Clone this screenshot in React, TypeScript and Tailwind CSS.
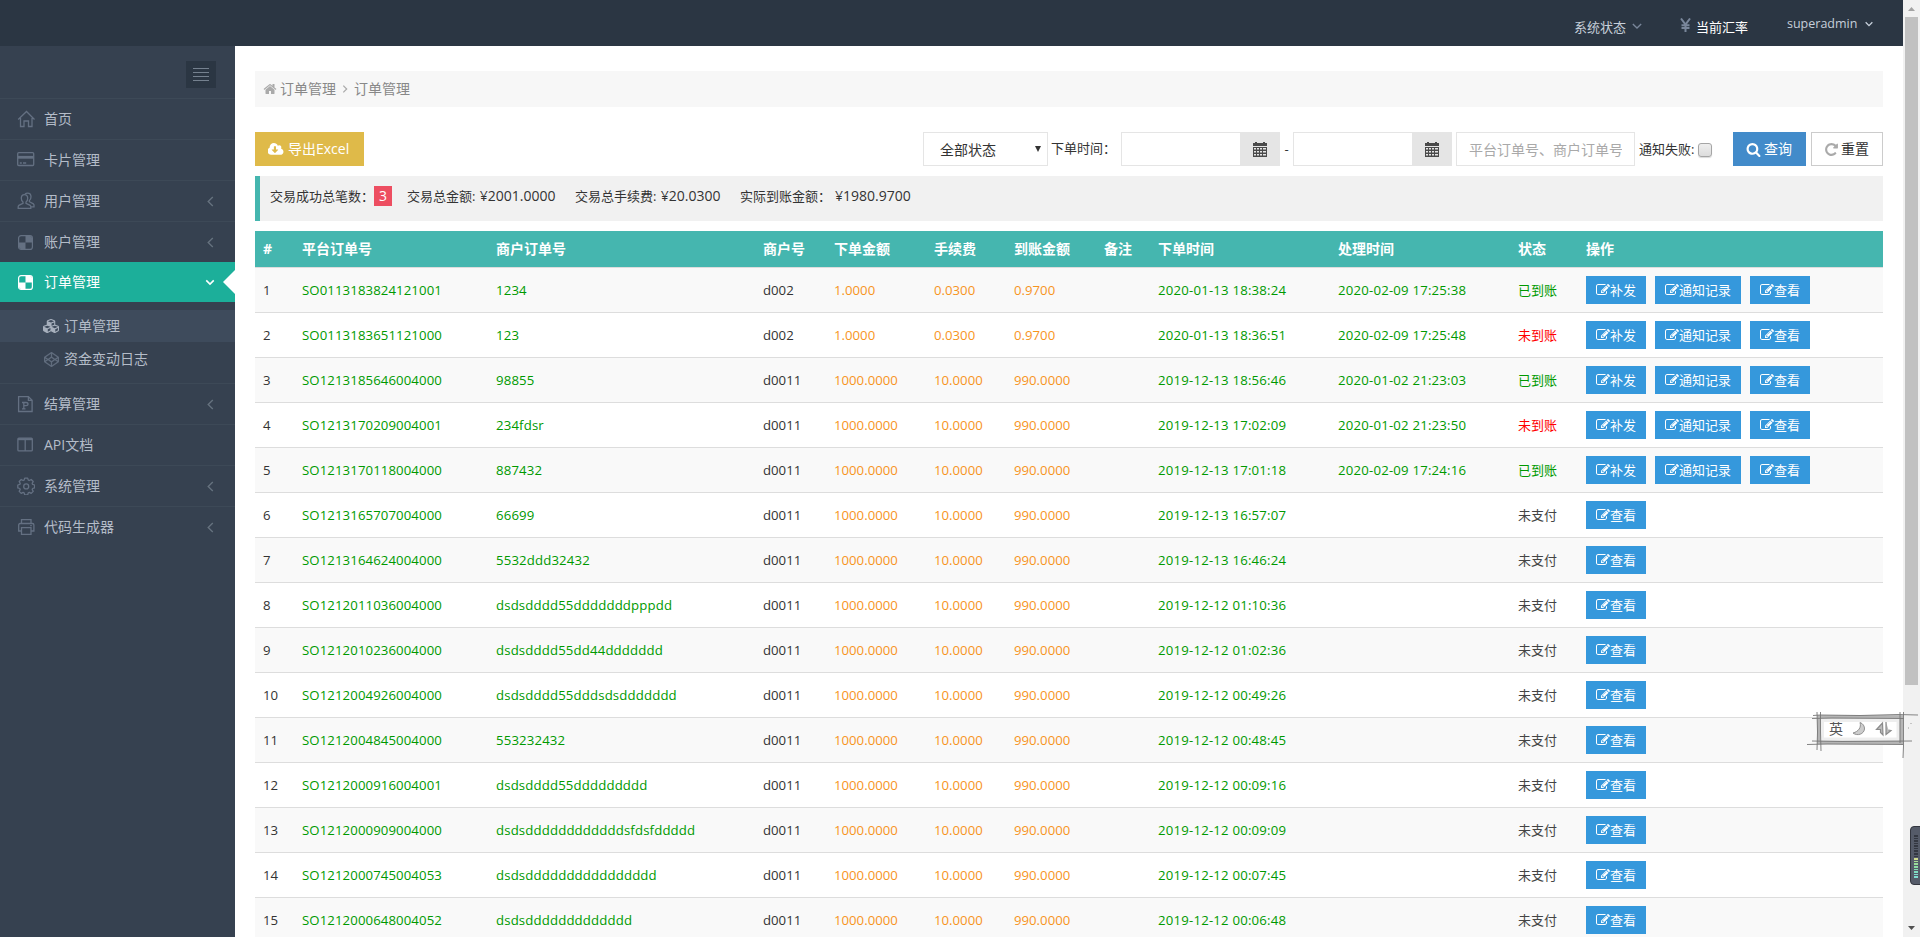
import React from 'react';
import { FaCubes, FaCodepen } from 'react-icons/fa';

interface Order {
  no: string;
  merchantNo: string;
  merchant: string;
  amount: string;
  fee: string;
  received: string;
  createdAt: string;
  handledAt?: string;
  status: '已到账' | '未到账' | '未支付';
}

const small = { merchant: 'd002', amount: '1.0000', fee: '0.0300', received: '0.9700' };
const large = { merchant: 'd0011', amount: '1000.0000', fee: '10.0000', received: '990.0000' };

const orders: Order[] = [
  { no: 'SO0113183824121001', merchantNo: '1234', ...small, createdAt: '2020-01-13 18:38:24', handledAt: '2020-02-09 17:25:38', status: '已到账' },
  { no: 'SO0113183651121000', merchantNo: '123', ...small, createdAt: '2020-01-13 18:36:51', handledAt: '2020-02-09 17:25:48', status: '未到账' },
  { no: 'SO1213185646004000', merchantNo: '98855', ...large, createdAt: '2019-12-13 18:56:46', handledAt: '2020-01-02 21:23:03', status: '已到账' },
  { no: 'SO1213170209004001', merchantNo: '234fdsr', ...large, createdAt: '2019-12-13 17:02:09', handledAt: '2020-01-02 21:23:50', status: '未到账' },
  { no: 'SO1213170118004000', merchantNo: '887432', ...large, createdAt: '2019-12-13 17:01:18', handledAt: '2020-02-09 17:24:16', status: '已到账' },
  { no: 'SO1213165707004000', merchantNo: '66699', ...large, createdAt: '2019-12-13 16:57:07', status: '未支付' },
  { no: 'SO1213164624004000', merchantNo: '5532ddd32432', ...large, createdAt: '2019-12-13 16:46:24', status: '未支付' },
  { no: 'SO1212011036004000', merchantNo: 'dsdsdddd55dddddddpppdd', ...large, createdAt: '2019-12-12 01:10:36', status: '未支付' },
  { no: 'SO1212010236004000', merchantNo: 'dsdsdddd55dd44ddddddd', ...large, createdAt: '2019-12-12 01:02:36', status: '未支付' },
  { no: 'SO1212004926004000', merchantNo: 'dsdsdddd55dddsdsddddddd', ...large, createdAt: '2019-12-12 00:49:26', status: '未支付' },
  { no: 'SO1212004845004000', merchantNo: '553232432', ...large, createdAt: '2019-12-12 00:48:45', status: '未支付' },
  { no: 'SO1212000916004001', merchantNo: 'dsdsdddd55ddddddddd', ...large, createdAt: '2019-12-12 00:09:16', status: '未支付' },
  { no: 'SO1212000909004000', merchantNo: 'dsdsddddddddddddsfdsfddddd', ...large, createdAt: '2019-12-12 00:09:09', status: '未支付' },
  { no: 'SO1212000745004053', merchantNo: 'dsdsdddddddddddddddd', ...large, createdAt: '2019-12-12 00:07:45', status: '未支付' },
  { no: 'SO1212000648004052', merchantNo: 'dsdsddddddddddddd', ...large, createdAt: '2019-12-12 00:06:48', status: '未支付' },
];

const statusColor = {
  已到账: 'text-[#009900]',
  未到账: 'text-[#ff0000]',
  未支付: 'text-[#444]',
};

const columns = [
  { title: '#', width: 'w-[39px]' },
  { title: '平台订单号', width: 'w-[194px]' },
  { title: '商户订单号', width: 'w-[267px]' },
  { title: '商户号', width: 'w-[71px]' },
  { title: '下单金额', width: 'w-[100px]' },
  { title: '手续费', width: 'w-[80px]' },
  { title: '到账金额', width: 'w-[90px]' },
  { title: '备注', width: 'w-[54px]' },
  { title: '下单时间', width: 'w-[180px]' },
  { title: '处理时间', width: 'w-[180px]' },
  { title: '状态', width: 'w-[68px]' },
  { title: '操作', width: 'w-[305px]' },
];

/* ---------- icons ---------- */

type IconProps = { className?: string };

const HomeSolid = ({ className }: IconProps) => (
  <svg viewBox="0 0 1792 1792" fill="currentColor" className={className}>
    <path d="M1472 992v480q0 26-19 45t-45 19h-384v-384h-256v384h-384q-26 0-45-19t-19-45v-480q0-1 .5-3t.5-3l575-474 575 474q1 2 1 6zm223-69l-62 74q-8 9-21 11h-3q-13 0-21-7l-692-577-692 577q-12 8-24 7-13-2-21-11l-62-74q-8-10-7-23.5t11-21.5l719-599q32-26 76-26t76 26l244 204v-195q0-14 9-23t23-9h192q14 0 23 9t9 23v408l219 182q10 8 11 21.5t-7 23.5z" />
  </svg>
);

const SearchIcon = ({ className }: IconProps) => (
  <svg viewBox="0 0 1792 1792" fill="currentColor" className={className}>
    <path d="M1216 832q0-185-131.5-316.5t-316.5-131.5-316.5 131.5-131.5 316.5 131.5 316.5 316.5 131.5 316.5-131.5 131.5-316.5zm512 832q0 52-38 90t-90 38q-54 0-90-38l-343-342q-179 124-399 124-143 0-273.5-55.5t-225-150-150-225-55.5-273.5 55.5-273.5 150-225 225-150 273.5-55.5 273.5 55.5 225 150 150 225 55.5 273.5q0 220-124 399l343 343q37 37 37 90z" />
  </svg>
);

const EditIcon = ({ className }: IconProps) => (
  <svg viewBox="0 0 1792 1792" fill="currentColor" className={className}>
    <path d="M888 1184l116-116-152-152-116 116v56h96v96h56zm440-720q-16-16-33 1l-350 350q-17 17-1 33t33-1l350-350q17-17 1-33zm80 594v190q0 119-84.5 203.5t-203.5 84.5h-832q-119 0-203.5-84.5t-84.5-203.5v-832q0-119 84.5-203.5t203.5-84.5h832q63 0 117 25 15 7 18 23 3 17-9 29l-49 49q-14 14-32 8-23-6-45-6h-832q-66 0-113 47t-47 113v832q0 66 47 113t113 47h832q66 0 113-47t47-113v-126q0-13 9-22l64-64q15-15 35-7t20 29zm-96-738l288 288-672 672h-288v-288zm444 132l-92 92-288-288 92-92q28-28 68-28t68 28l152 152q28 28 28 68t-28 68z" />
  </svg>
);

const RepeatIcon = ({ className }: IconProps) => (
  <svg viewBox="0 0 1792 1792" fill="currentColor" className={className}>
    <path d="M1664 256v448q0 26-19 45t-45 19h-448q-42 0-59-40-17-39 14-69l138-138q-148-137-349-137-104 0-198.5 40.5t-163.5 109.5-109.5 163.5-40.5 198.5 40.5 198.5 109.5 163.5 163.5 109.5 198.5 40.5q119 0 225-52t179-147q7-10 23-12 15 0 25 9l137 138q9 8 9.5 20.5t-7.5 22.5q-109 132-264 204.5t-327 72.5q-156 0-298-61t-245-164-164-245-61-298 61-298 164-245 245-164 298-61q147 0 284.5 55.5t244.5 156.5l130-129q29-31 70-14 39 17 39 59z" />
  </svg>
);

const CloudDownload = ({ className }: IconProps) => (
  <svg viewBox="0 0 1920 1792" fill="currentColor" className={className}>
    <path d="M1216 928q0-14-9-23t-23-9h-224v-352q0-13-9.5-22.5t-22.5-9.5h-192q-13 0-22.5 9.5t-9.5 22.5v352h-224q-13 0-22.5 9.5t-9.5 22.5q0 14 9 23l352 352q9 9 23 9t23-9l351-351q10-12 10-24zm640 224q0 159-112.5 271.5t-271.5 112.5h-1088q-185 0-316.5-131.5t-131.5-316.5q0-130 70-240t188-165q-2-30-2-43 0-212 150-362t362-150q156 0 285.5 87t188.5 231q71-62 166-62 106 0 181 75t75 181q0 76-41 138 130 31 213.5 135.5t83.5 238.5z" />
  </svg>
);

const CalendarIcon = () => (
  <svg viewBox="0 0 14 15" className="w-[14px] h-[15px]" fill="#4a4a4a">
    <path d="M0 1h2V0h2v1h6V0h2v1h2v3H0z" />
    <path fillRule="evenodd" d="M0 5h14v10H0zM1 6v1.500h2V6zm3 0v1.500h2V6zm3 0v1.500h2V6zm3 0v1.500h3V6zM1 9v1.500h2V9zm3 0v1.500h2V9zm3 0v1.500h2V9zm3 0v1.500h3V9zM1 12v1.500h2V12zm3 0v1.500h2V12zm3 0v1.500h2V12zm3 0v1.500h3V12z" />
  </svg>
);

const LineIcon = ({ children }: { children: React.ReactNode }) => (
  <svg viewBox="0 0 18 18" className="w-[18px] h-[18px] shrink-0" fill="none" stroke="currentColor" strokeWidth="1.3">
    {children}
  </svg>
);

const HomeLine = () => (
  <LineIcon><path d="M1.200 9.500 9.500 1.500l8 8M3.500 8v8.500h3.500v-5.500h4.500v5.500H15V8" /></LineIcon>
);

const CardLine = () => (
  <LineIcon>
    <rect x=".7" y="1.700" width="16" height="12.800" rx="1" />
    <path d="M1 6.300h15.500" strokeWidth="2.800" />
    <path d="M2.800 12h2M6 12h3.200" />
  </LineIcon>
);

const UsersLine = () => (
  <LineIcon>
    <path d="M7.500 2.600c-2 0-3.200 1.400-3.200 3.600 0 1.800.7 3.200 1.700 3.800v1.300L1.800 13.400c-.4.300-.6.700-.6 1.300v1.700h12.600v-1.700c0-.6-.2-1-.6-1.300L9 11.300V10c1-.6 1.700-2 1.700-3.800 0-2.200-1.200-3.600-3.200-3.600z" />
    <path d="M8 2c.7-.6 1.600-.9 2.500-.9 2.200 0 3.500 1.400 3.500 3.700 0 1.700-.6 3-1.600 3.700v1.200l4 2.200c.4.300.6.600.6 1.100v1.800h-3" />
  </LineIcon>
);

const BoardIcon = () => (
  <svg viewBox="0 0 15 15" className="w-[15px] h-[15px] shrink-0 ml-[1px]">
    <rect x=".6" y=".6" width="13.800" height="13.800" rx="2.500" fill="none" stroke="currentColor" strokeWidth="1.200" />
    <path d="M7.500 1H12a2 2 0 0 1 2 2v4.500H7.500zM1 7.500h6.500V14H3a2 2 0 0 1-2-2z" fill="currentColor" />
  </svg>
);

const DocLine = () => (
  <LineIcon>
    <path d="M1.600 1.600h9.800l3.700 3.700v11.200H1.600zM11.400 1.600v3.700h3.700" />
    <path d="M6.800 7.500v6M5 7.500h4c1.200 0 2 .6 2 1.600s-.8 1.600-2 1.600H7M5 13.800h3.500" />
  </LineIcon>
);

const ColumnsLine = () => (
  <LineIcon>
    <rect x=".9" y="2.100" width="14.400" height="12.800" rx="1" />
    <path d="M1 3.200h14.200" strokeWidth="2" />
    <path d="M8.200 3v12" />
  </LineIcon>
);

const gearPath =
  'M8 1.500h3l.6 2 1 .4 1.900-1 2 2-1 1.900.4 1 2 .6v2.900l-2 .6-.4 1 1 1.900-2 2-1.900-1-1 .4-.6 2H8l-.6-2-1-.4-1.900 1-2-2 1-1.900-.4-1-2-.6V8.400l2-.6.4-1-1-1.900 2-2 1.900 1 1-.4z';

const GearLine = () => (
  <LineIcon>
    <path d={gearPath} transform="translate(-.3 -.4)" strokeLinejoin="round" />
    <circle cx="9.200" cy="9.400" r="2.500" />
  </LineIcon>
);

const PrinterLine = () => (
  <LineIcon>
    <path d="M4.500 5.500V1.600h9.500v3.900M4.500 13H1.700V7c0-.9.500-1.500 1.400-1.500h12.300c.9 0 1.500.6 1.500 1.500v6h-2.900M4.500 9.700H14v6.600H4.500zM13.200 7.700h1.600" />
  </LineIcon>
);

const Chevron = ({ d, className, stroke = 1.200 }: { d: string; className: string; stroke?: number }) => (
  <svg viewBox="0 0 12 12" fill="none" stroke="currentColor" strokeWidth={stroke} className={className}>
    <path d={d} />
  </svg>
);

/* ---------- layout parts ---------- */

const TopBar: React.FC = () => (
  <header className="flex h-[46px] shrink-0 justify-end bg-[#2b3643] text-[13px] leading-[20px] text-[#c6cfda]">
    <div className="flex w-[106px] pt-[17px]">
      <span>系统状态</span>
      <Chevron d="M1 3.500 6 8.500 11 3.500" stroke={1.600} className="ml-[6px] mt-[4px] w-[10px] h-[10px] text-[#79869a]" />
    </div>
    <div className="flex w-[107px] pt-[17px]">
      <svg viewBox="0 0 11 14" className="mt-[1px] mr-[5px] w-[11px] h-[14px]" fill="none" stroke="#79869a" strokeWidth="2">
        <path d="M1 .5 5.500 6.500 10 .5M5.500 6.500V14M1.500 7.200h8M1.500 10h8" />
      </svg>
      <span className="text-white">当前汇率</span>
    </div>
    <div className="flex w-[116px] pt-[14px]">
      <span className="w-[77px] text-[12.500px]">superadmin</span>
      <Chevron d="M2 4 6 8 10 4" stroke={1.600} className="mt-[5px] w-[10px] h-[10px]" />
    </div>
  </header>
);

const menuBefore = [
  { label: '首页', Icon: HomeLine, arrow: false },
  { label: '卡片管理', Icon: CardLine, arrow: false },
  { label: '用户管理', Icon: UsersLine, arrow: true },
  { label: '账户管理', Icon: BoardIcon, arrow: true },
];

const menuAfter = [
  { label: '结算管理', Icon: DocLine, arrow: true },
  { label: 'API文档', Icon: ColumnsLine, arrow: false },
  { label: '系统管理', Icon: GearLine, arrow: true },
  { label: '代码生成器', Icon: PrinterLine, arrow: true },
];

const MenuItem = ({ label, Icon, arrow }: { label: string; Icon: React.FC; arrow: boolean }) => (
  <li className="flex h-[41px] items-center border-t border-[#3d4957] pl-[17px] pr-[19px]">
    <span className="flex w-[27px] text-[#647082]"><Icon /></span>
    <span className="flex-1 text-[#b4bcc8]">{label}</span>
    {arrow && <Chevron d="M8.500 1 3.500 6 8.500 11" stroke={1.500} className="w-[11px] h-[11px] text-[#66727f]" />}
  </li>
);

const Sidebar: React.FC = () => (
  <aside className="w-[235px] shrink-0 bg-[#364150]">
    <div className="flex justify-end pt-[15px] pr-[19px] h-[52px]">
      <button className="flex h-[27px] w-[30px] flex-col items-center justify-center gap-[3px] bg-[#2b3643]">
        {[0, 1, 2, 3].map(i => <span key={i} className="h-px w-[16px] bg-[#75818f]"></span>)}
      </button>
    </div>
    <ul className="text-[14px] leading-[20px]">
      {menuBefore.map(item => <MenuItem key={item.label} {...item} />)}
      <li>
        <div className="relative flex h-[40px] items-center bg-[#1caf9a] pl-[17px] pr-[20px] text-white">
          <span className="flex w-[27px]"><BoardIcon /></span>
          <span className="flex-1">订单管理</span>
          <Chevron d="M1.500 4 6 8.500 10.500 4" stroke={1.900} className="w-[10px] h-[10px]" />
          <span className="absolute right-0 top-[8px] border-y-[12px] border-r-[12px] border-y-transparent border-r-white"></span>
        </div>
        <ul className="py-[8px] text-[#b4bcc8]">
          <li className="mb-px flex h-[32px] items-center bg-[#3e4b5c] pl-[42px]">
            <FaCubes className="mr-[4px] w-[18px] h-[16px] text-[#a7b0bd]" />订单管理
          </li>
          <li className="flex h-[32px] items-center pl-[44px]">
            <FaCodepen className="mr-[5px] w-[15px] h-[15px] text-[#606c7d]" />资金变动日志
          </li>
        </ul>
      </li>
      {menuAfter.map(item => <MenuItem key={item.label} {...item} />)}
    </ul>
  </aside>
);

const DateInput: React.FC = () => (
  <div className="flex h-[34px] w-[159px]">
    <input className="min-w-0 flex-1 border border-r-0 border-[#e5e5e5] outline-none" />
    <span className="flex w-[40px] items-center justify-center bg-[#e5e5e5]"><CalendarIcon /></span>
  </div>
);

const Filters: React.FC = () => (
  <div className="flex h-[34px] text-[13px] leading-[34px] text-[#333]">
    <button className="flex w-[109px] items-center bg-[#dfba49] pl-[13px] text-[14px] text-white">
      <CloudDownload className="mr-[4px] w-[16px] h-[15px]" />
      <span>导出Excel</span>
    </button>
    <div className="ml-auto flex w-[125px] justify-between border border-[#e5e5e5] pl-[16px] pr-[6px] text-[14px]">
      <span>全部状态</span>
      <svg viewBox="0 0 6 6" className="mt-[13px] w-[6px] h-[6px]" fill="#333"><path d="M0 0h6L3 6z" /></svg>
    </div>
    <span className="ml-[3px] w-[70px] -mt-[1px] whitespace-nowrap">下单时间：</span>
    <DateInput />
    <span className="w-[13px] text-center">-</span>
    <DateInput />
    <input placeholder="平台订单号、商户订单号" className="ml-[4px] w-[179px] border border-[#e5e5e5] px-[12px] text-[14px] leading-normal outline-none placeholder:text-[#a9a9a9]" />
    <span className="ml-[4px] w-[59px]">通知失败:</span>
    <span className="mt-[11px] h-[14px] w-[14px] rounded-[3px] border border-[#a5a5a5] bg-gradient-to-b from-[#eee] to-[#dcdcdc] shadow-[0_1px_1px_rgba(0,0,0,0.15)]"></span>
    <button className="ml-[21px] flex w-[73px] items-center bg-[#428bca] pl-[13px] text-[14px] text-white">
      <SearchIcon className="mr-[3px] w-[15px] h-[15px]" />查询
    </button>
    <button className="ml-[5px] flex w-[72px] items-center border border-[#ccc] pl-[12px] text-[14px]">
      <RepeatIcon className="mr-[2px] w-[15px] h-[15px] text-[#aaa]" />重置
    </button>
  </div>
);

const Summary: React.FC = () => (
  <div className="mt-[10px] flex h-[45px] border-l-[5px] border-[#45b6af] bg-[#f1f1f1] pl-[10px] pt-[10px] text-[13px] leading-[20px] whitespace-nowrap text-[#333]">
    <span className="w-[104px]">交易成功总笔数：</span>
    <span className="mr-[15px] h-[20px] w-[18px] bg-[#ed4e61] text-center text-[14px] text-white">3</span>
    <span className="w-[168px]">交易总金额: <span className="ml-[1px] text-[14px]">¥2001.0000</span></span>
    <span className="w-[165px]">交易总手续费: <span className="ml-[1px] text-[14px]">¥20.0300</span></span>
    <span className="w-[95px]">实际到账金额：</span>
    <span className="text-[14px]">¥1980.9700</span>
  </div>
);

const RowButton = ({ children, wide }: { children: React.ReactNode; wide?: boolean }) => (
  <button className={`flex h-[28px] items-center bg-[#3598dc] pl-[10px] text-[13px] text-white ${wide ? 'w-[86px]' : 'w-[60px]'}`}>
    <EditIcon className="w-[14px] h-[14px] shrink-0" />{children}
  </button>
);

const OrderTable: React.FC = () => (
  <table className="mt-[10px] w-[1628px] table-fixed border-collapse text-left text-[13.200px] leading-[20px] whitespace-nowrap">
    <thead>
      <tr className="h-[36px] bg-[#45b6af] text-[14px] text-white">
        {columns.map(col => (
          <th key={col.title} className={`${col.width} px-[8px] py-0 font-bold`}>{col.title}</th>
        ))}
      </tr>
    </thead>
    <tbody>
      {orders.map((order, i) => (
        <tr key={order.no} className="h-[45px] border-t border-[#ddd] odd:bg-[#f9f9f9] text-[#009900]">
          <td className="px-[8px] text-[#333]">{i + 1}</td>
          <td className="px-[8px] tracking-[0.1px]">{order.no}</td>
          <td className="px-[8px] tracking-[0.15px]">{order.merchantNo}</td>
          <td className="px-[8px] text-[#333]">{order.merchant}</td>
          <td className="px-[8px] text-[#f7941d]">{order.amount}</td>
          <td className="px-[8px] text-[#f7941d]">{order.fee}</td>
          <td className="px-[8px] text-[#f7941d]">{order.received}</td>
          <td></td>
          <td className="px-[8px] tracking-[0.2px]">{order.createdAt}</td>
          <td className="px-[8px] tracking-[0.2px]">{order.handledAt}</td>
          <td className={`px-[8px] text-[13px] ${statusColor[order.status]}`}>{order.status}</td>
          <td className="px-[8px]">
            <div className="flex gap-[9px]">
              {order.handledAt && <RowButton>补发</RowButton>}
              {order.handledAt && <RowButton wide>通知记录</RowButton>}
              <RowButton>查看</RowButton>
            </div>
          </td>
        </tr>
      ))}
    </tbody>
  </table>
);

const Scrollbar: React.FC = () => (
  <div className="flex w-[17px] shrink-0 flex-col items-center bg-[#f1f1f1]">
    <svg viewBox="0 0 17 17" className="w-[17px] h-[17px]" fill="#a3a3a3"><path d="M5 11h7L8.500 7z" /></svg>
    <div className="h-[668px] w-[13px] bg-[#c1c1c1]"></div>
    <svg viewBox="0 0 17 17" className="mt-auto w-[17px] h-[17px]" fill="#505050"><path d="M5 6h7l-3.500 4z" /></svg>
  </div>
);

// floating input-method toolbar with a pencil-sketched frame
const ImeBar: React.FC = () => (
  <div className="absolute left-[1806px] top-[708px] h-[54px] w-[114px]">
    <svg viewBox="0 0 114 54" className="absolute inset-0 w-[114px] h-[54px]" fill="none">
      <rect x="12" y="8" width="84" height="27" fill="#fff" />
      <rect x="16" y="12" width="76.500" height="19.500" stroke="#eee" strokeWidth="4" />
      <rect x="12.800" y="8.800" width="82.700" height="25.700" stroke="#b5b5b5" strokeWidth="3.400" />
      <g stroke="#777" strokeWidth=".9">
        <path d="M7 7.500 14 7l40 .5 38-1 20 .5M6 10.500l20-.5 72 .5" />
        <path d="M1 36.500l20-.5 76 .5M6 33l30 .5 70-.5" />
        <path d="M11 4l.5 20L11 42M14.500 4v20l.5 19" />
        <path d="M94 4v31M97.500 4v34l-.5 12" />
      </g>
      <path d="M104.500 15.500h1M102 20h1" stroke="#999" />
      <path d="M54 14.500c1.500 5-1.500 9-7 10.500 4.500 3.500 11 1 11.500-4 .2-2.800-1.500-5.500-4.500-6.500z" fill="#ccc" stroke="#888" strokeWidth=".9" />
      <path d="m76.500 15-6 6.500h4v3l2.500 2.500zM80 14v12.500l5-4-2.500-.5" stroke="#8c8c8c" strokeWidth="1.200" fill="#bbb" />
    </svg>
    <span className="absolute left-[23px] top-[10px] text-[14px] leading-[22px] text-[#555]">英</span>
  </div>
);

const meterColors = [
  '#7fdcd0', '#7fdcd0', '#7fdcc0', '#84dcb0', '#8cdca4', '#98dc9a', '#a8dc94', '#d0dc90',
];

const LevelMeter: React.FC = () => (
  <div className="absolute left-[1910px] top-[826px] flex h-[59px] w-[12px] flex-col-reverse gap-px rounded-l-[4px] border border-[#33363f] bg-[#555b69] pl-[3px] pb-[6px]">
    {Array.from({ length: 17 }, (_, i) => (
      <span key={i} className="h-[1.600px] w-[4px]" style={{ backgroundColor: meterColors[i] || '#343842' }}></span>
    ))}
  </div>
);

const App: React.FC = () => {
  return (
    <div
      className="relative flex h-[937px] w-full overflow-hidden bg-white font-['Open_Sans','Noto_Sans_CJK_SC',sans-serif]"
      lang="zh-CN"
    >
      <div className="flex min-w-0 flex-1 flex-col">
        <TopBar />
        <div className="flex min-h-0 flex-1">
          <Sidebar />
          <main className="min-w-0 flex-1 overflow-hidden px-[20px] pt-[25px]">
            <div className="mb-[25px] flex h-[36px] items-center bg-[#f7f7f7] pl-[8px] text-[14px] leading-[20px] text-[#888]">
              <HomeSolid className="mr-[3px] w-[14px] h-[14px] text-[#aaa]" />
              <span>订单管理</span>
              <Chevron d="M4 2 8 6 4 10" stroke={1.500} className="mx-[4px] w-[10px] h-[10px] text-[#aaa]" />
              <span>订单管理</span>
            </div>
            <Filters />
            <Summary />
            <OrderTable />
          </main>
        </div>
      </div>
      <Scrollbar />
      <ImeBar />
      <LevelMeter />
    </div>
  );
};

export default App;
